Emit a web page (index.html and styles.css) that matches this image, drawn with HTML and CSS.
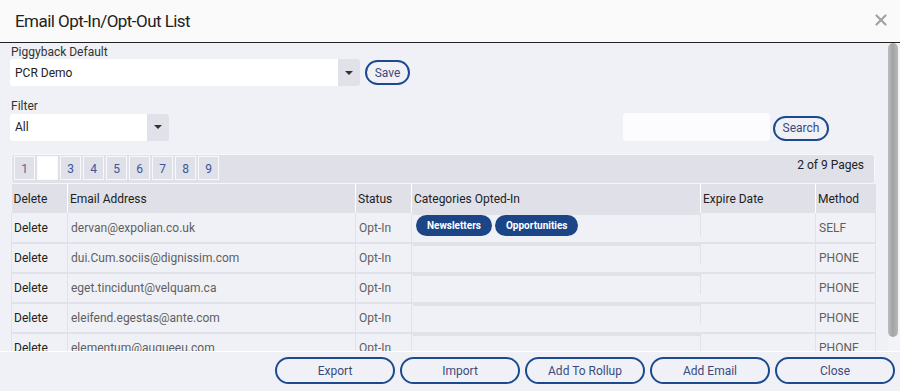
FILE: index.html
```html
<!DOCTYPE html>
<html>
<head>
<meta charset="utf-8">
<link rel="stylesheet" href="styles.css">
</head>
<body>
<div class="modal">
  <header class="modal-header">
    <h1 class="title">Email Opt-In/Opt-Out List</h1>
    <svg class="close-x" width="12" height="12" viewBox="0 0 12 12"><path d="M1.5 1.5 L10.5 10.5 M10.5 1.5 L1.5 10.5" stroke="#a3a3a3" stroke-width="2.2" stroke-linecap="round"/></svg>
  </header>
  <div class="body-wrap">
    <div class="modal-body">
      <div class="field">
        <div class="label">Piggyback Default</div>
        <div class="field-row">
          <div class="select select-wide"><span class="select-text">PCR Demo</span><span class="select-arrow"><span class="caret"></span></span></div>
          <button class="pill-btn save-btn">Save</button>
        </div>
      </div>
      <div class="field">
        <div class="label">Filter</div>
        <div class="field-row">
          <div class="select select-narrow"><span class="select-text">All</span><span class="select-arrow"><span class="caret"></span></span></div>
          <div class="search-group">
            <div class="search-input"></div>
            <button class="pill-btn search-btn">Search</button>
          </div>
        </div>
      </div>
      <div class="grid">
        <div class="pager">
          <div class="pages">
            <span class="page visited">1</span>
            <span class="page active">2</span>
            <span class="page">3</span>
            <span class="page">4</span>
            <span class="page">5</span>
            <span class="page">6</span>
            <span class="page">7</span>
            <span class="page">8</span>
            <span class="page">9</span>
          </div>
          <div class="page-count">2 of 9 Pages</div>
        </div>
        <table class="list">
          <colgroup>
            <col class="c-del"><col class="c-email"><col class="c-status"><col class="c-cat"><col class="c-exp"><col class="c-method">
          </colgroup>
          <thead>
            <tr><th>Delete</th><th>Email Address</th><th>Status</th><th>Categories Opted-In</th><th>Expire Date</th><th>Method</th></tr>
          </thead>
          <tbody>
            <tr><td class="del">Delete</td><td class="muted">dervan@expolian.co.uk</td><td class="muted">Opt-In</td><td class="cat"><div class="cats"><span class="tag">Newsletters</span><span class="tag">Opportunities</span></div></td><td class="exp"></td><td class="muted method">SELF</td></tr>
            <tr><td class="del">Delete</td><td class="muted">dui.Cum.sociis@dignissim.com</td><td class="muted">Opt-In</td><td class="cat"><div class="cats"></div></td><td class="exp"></td><td class="muted method">PHONE</td></tr>
            <tr><td class="del">Delete</td><td class="muted">eget.tincidunt@velquam.ca</td><td class="muted">Opt-In</td><td class="cat"><div class="cats"></div></td><td class="exp"></td><td class="muted method">PHONE</td></tr>
            <tr><td class="del">Delete</td><td class="muted">eleifend.egestas@ante.com</td><td class="muted">Opt-In</td><td class="cat"><div class="cats"></div></td><td class="exp"></td><td class="muted method">PHONE</td></tr>
            <tr><td class="del">Delete</td><td class="muted">elementum@augueeu.com</td><td class="muted">Opt-In</td><td class="cat"><div class="cats"></div></td><td class="exp"></td><td class="muted method">PHONE</td></tr>
          </tbody>
        </table>
      </div>
    </div>
    <div class="scrollbar"><div class="thumb"></div></div>
  </div>
  <footer class="modal-footer">
    <button class="pill-btn foot-btn">Export</button>
    <button class="pill-btn foot-btn">Import</button>
    <button class="pill-btn foot-btn">Add To Rollup</button>
    <button class="pill-btn foot-btn">Add Email</button>
    <button class="pill-btn foot-btn">Close</button>
  </footer>
</div>
</body>
</html>
```

FILE: styles.css
```css
* { box-sizing: border-box; }
html, body { margin: 0; padding: 0; }
body {
  width: 900px;
  height: 391px;
  overflow: hidden;
  font-family: Roboto, "Liberation Sans", Arial, sans-serif;
  font-size: 12px;
  color: #333;
  background: #f0f1f6;
}
.modal {
  display: flex;
  flex-direction: column;
  height: 391px;
}
.modal-header {
  height: 43px;
  flex: none;
  background: #fafafa;
  border-bottom: 1px solid #222;
  display: flex;
  align-items: center;
  justify-content: space-between;
  padding: 0 13px 0 15px;
}
.title {
  margin: 0;
  font-size: 17px;
  letter-spacing: -0.55px;
  font-weight: 400;
  color: #222;
  line-height: 20px;
  padding-bottom: 1px;
}
.close-x { display: block; margin-bottom: 2px; }
.body-wrap {
  height: 308px;
  flex: none;
  display: flex;
}
.modal-body {
  flex: 1;
  min-width: 0;
  overflow: hidden;
  padding: 2px 13px 3px 10px;
}
.scrollbar {
  width: 12px;
  flex: none;
  background: #f3f4f7;
  padding: 0 2px 0 0;
}
.thumb {
  height: 294px;
  width: 10px;
  border-radius: 5px;
  background: linear-gradient(90deg, #bdbdbd, #a4a4a4 45%, #a8a8a8 60%, #b8b8b8);
}
.field { margin-bottom: 13px; }
.label {
  line-height: 14px;
  height: 14px;
  padding-left: 1px;
  color: #333;
}
.field-row {
  display: flex;
  align-items: center;
}
.select {
  height: 27px;
  background: #fff;
  border-radius: 3px;
  display: flex;
  align-items: center;
  justify-content: space-between;
  overflow: hidden;
}
.select-wide { width: 350px; }
.select-narrow { width: 159px; }
.select-text {
  padding-left: 5px;
  color: #222;
}
.select-arrow {
  width: 22px;
  height: 27px;
  background: #e1e2e9;
  display: flex;
  align-items: center;
  justify-content: center;
}
.caret {
  width: 0;
  height: 0;
  border-left: 4px solid transparent;
  border-right: 4px solid transparent;
  border-top: 4px solid #333;
}
.pill-btn {
  font-family: Roboto, "Liberation Sans", Arial, sans-serif;
  font-size: 12px;
  color: #3b4a7e;
  background: #f0f1f6;
  border: 2px solid #1d4a8f;
  border-radius: 13px;
  padding: 0;
  height: 25px;
  line-height: 20px;
}
.save-btn { width: 45px; margin-left: 5px; }
.search-group {
  display: flex;
  align-items: center;
  margin-left: auto;
  margin-right: 46px;
}
.search-input {
  width: 147px;
  height: 28px;
  background: #fcfcfe;
  border-radius: 3px;
}
.search-btn { width: 56px; margin-left: 3px; margin-top: 2px; }
.grid { margin-left: 1px; }
.pager {
  height: 30px;
  background: #dfe0e8;
  border: 1px solid #f6f7fa;
  border-radius: 3px;
  display: flex;
  justify-content: space-between;
  padding: 1px 10px 0 2px;
}
.pages { display: flex; gap: 2px; }
.page {
  width: 21px;
  height: 24px;
  border: 1px solid #f7f8fb;
  display: flex;
  align-items: center;
  justify-content: center;
  color: #3a559a;
  padding-top: 1px;
}
.page.visited { color: #6b5d90; }
.page.active { background: #fff; color: #fff; }
.page-count {
  color: #222;
  line-height: 14px;
  padding-top: 2px;
}
.list {
  width: 864px;
  table-layout: fixed;
  border-collapse: collapse;
}
.c-del { width: 56px; }
.c-email { width: 288px; }
.c-status { width: 56px; }
.c-cat { width: 289px; }
.c-exp { width: 115px; }
.c-method { width: 60px; }
.list th {
  height: 29px;
  background: #dfe0e8;
  text-align: left;
  font-weight: 400;
  color: #222;
  padding: 0 2px;
  border-left: 1px solid #fff;
  white-space: nowrap;
}
.list th:first-child { border-left: none; padding-left: 2px; }
.list td {
  height: 30px;
  padding: 0 3px;
  border-left: 1px solid #e0e1e9;
  border-right: 1px solid #e0e1e9;
  border-bottom: 2px solid #e0e1e9;
  white-space: nowrap;
  overflow: hidden;
  vertical-align: middle;
}
.list td.del { padding-left: 2px; color: #222; }
.muted { color: #5f5f5f; }
.list td.cat {
  vertical-align: top;
  padding: 0 0 0 1px;
  border-right: none;
}
.list td.exp { border-left: none; }
.cats {
  border-top: 2px solid #e0e1e9;
  border-right: 1px solid #e0e1e9;
  min-height: 20px;
  padding: 0 0 1px 3px;
  display: flex;
  gap: 3px;
}
.tag {
  display: inline-block;
  height: 21px;
  line-height: 21px;
  padding: 0 11px;
  border-radius: 11px;
  background: #1c4587;
  color: #fff;
  font-size: 10px;
  font-weight: 700;
}
.modal-footer {
  flex: none;
  height: 40px;
  border-top: 1px solid #fff;
  background: #f0f1f6;
  display: flex;
  justify-content: flex-end;
  align-items: flex-start;
  gap: 5px;
  padding: 5px 5px 0 0;
}
.foot-btn { width: 120px; height: 27px; border-radius: 14px; }
```
